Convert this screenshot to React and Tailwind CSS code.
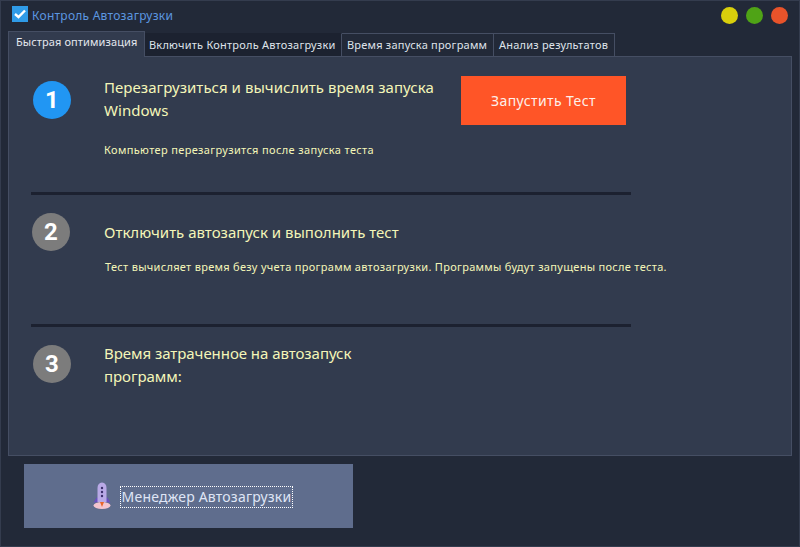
function Rocket() {
  return (
    <svg width="18" height="28" viewBox="0 0 18 28">
      <ellipse cx="9" cy="23.5" rx="8.5" ry="3.5" fill="#f3c4cf" />
      <path d="M4 15 L0.5 20.5 L6 20 Z M14 15 L17.5 20.5 L12 20 Z" fill="#6a4fc0" />
      <path d="M4.5 6 Q4.5 1 9 0.5 Q13.5 1 13.5 6 L13.5 20 L4.5 20 Z" fill="#b9a9e6" />
      <circle cx="9" cy="6" r="1.2" fill="#3b2f6b" />
      <circle cx="9" cy="10" r="1.2" fill="#3b2f6b" />
      <circle cx="9" cy="14" r="1.2" fill="#3b2f6b" />
      <path d="M7 20 L11 20 L9 25 Z" fill="#e8662a" />
    </svg>
  );
}

function Circle({ n, active, className }) {
  return (
    <div
      className={`w-[38px] h-[38px] rounded-full flex items-center justify-center text-white text-[24px] font-bold shrink-0 font-['Roboto',sans-serif] ${
        active ? "bg-[#2196f3]" : "bg-[#7c7c7c]"
      } ${className}`}
    >
      {n}
    </div>
  );
}

function Tab({ children, active, className }) {
  return (
    <div
      className={
        active
          ? `h-[26px] -mb-px z-10 pl-[7px] w-[137px] bg-[#323b4e] border border-b-0 border-[#454e63] text-[#e4e7ee] text-[11px] leading-[20px] tracking-[0.1px] whitespace-nowrap ${className}`
          : `h-[23px] mt-[2px] px-[4px] border-t border-r border-[#454e63] text-[#dfe3ea] text-[11px] leading-[21px] tracking-[0.22px] whitespace-nowrap ${className}`
      }
    >
      {children}
    </div>
  );
}

export default function App() {
  return (
    <div className="w-[800px] h-[547px] overflow-hidden bg-[#222938] border border-[#343c4e] font-['Noto_Sans',sans-serif] flex flex-col">
      <div className="h-[30px] flex items-center pl-[11px] pr-[11px] shrink-0">
        <div className="w-4 h-4 bg-[#2f9be8] flex items-center justify-center mb-[4px]">
          <svg width="12" height="10" viewBox="0 0 12 10">
            <path d="M1 5 L4.5 8 L11 1.5" stroke="white" strokeWidth="2.4" fill="none" />
          </svg>
        </div>
        <span className="ml-[4px] text-[12px] tracking-[0.25px] text-[#5c97e0]">Контроль Автозагрузки</span>
        <div className="ml-auto flex gap-[8px] mb-[1px]">
          <div className="w-[17px] h-[17px] rounded-full bg-[#d9cf0c]" />
          <div className="w-[17px] h-[17px] rounded-full bg-[#4fa316]" />
          <div className="w-[17px] h-[17px] rounded-full bg-[#e8532a]" />
        </div>
      </div>

      <div className="flex items-start pl-[7px] h-[25px] shrink-0">
        <Tab active>Быстрая оптимизация</Tab>
        <Tab className="bg-[#1c2230] w-[197px] border-t-[#1c2230]">Включить Контроль Автозагрузки</Tab>
        <Tab className="w-[152px] pl-[5px]">Время запуска программ</Tab>
        <Tab className="w-[121px] pl-[5px]">Анализ результатов</Tab>
      </div>

      <div className="ml-[7px] w-[784px] h-[400px] bg-[#323b4e] border border-[#454e63] shrink-0 pl-[22px]">
        <div className="h-[135px] flex pt-[19px]">
          <Circle n="1" active className="ml-[2px] mt-[5px]" />
          <div className="ml-[33px] w-[357px]">
            <div className="text-[15px] leading-[23px] tracking-[0.05px] text-[#f4f6b8]">
              Перезагрузиться и вычислить время запуска Windows
            </div>
            <div className="mt-[20px] text-[11px] leading-[16px] tracking-[0.36px] text-[#f4f6b8]">
              Компьютер перезагрузится после запуска теста
            </div>
          </div>
          <div className="w-[165px] h-[49px] bg-[#ff5527] text-[#fdf0ea] text-[14px] tracking-[0.4px] flex items-center justify-center">
            Запустить Тест
          </div>
        </div>
        <div className="w-[600px] h-[3px] bg-[#1c2130]" />
        <div className="h-[129px] flex pt-[18px]">
          <Circle n="2" className="ml-[1px]" />
          <div className="ml-[34px]">
            <div className="text-[15px] leading-[23px] text-[#f4f6b8] mt-[8px]">
              Отключить автозапуск и выполнить тест
            </div>
            <div className="mt-[15px] ml-px text-[11px] leading-[16px] tracking-[0.3px] text-[#f4f6b8] whitespace-nowrap">
              Тест вычисляет время безу учета программ автозагрузки. Программы будут запущены после теста.
            </div>
          </div>
        </div>
        <div className="w-[600px] h-[3px] bg-[#1c2130]" />
        <div className="flex pt-[18px]">
          <Circle n="3" className="ml-[2px]" />
          <div className="ml-[33px] w-[270px] text-[15px] leading-[23px] tracking-[-0.05px] text-[#f4f6b8] -mt-[3px]">
            Время затраченное на автозапуск программ:
          </div>
        </div>
      </div>

      <div className="ml-[23px] mt-[8px] w-[329px] h-[64px] bg-[#5f6d8d] flex items-center justify-center pl-[9px] shrink-0">
        <Rocket />
        <span className="ml-[9px] mt-[2px] px-px border border-dotted border-white text-[14px] leading-[20px] tracking-[0.2px] text-[#dfe5f5]">
          Менеджер Автозагрузки
        </span>
      </div>
    </div>
  );
}
